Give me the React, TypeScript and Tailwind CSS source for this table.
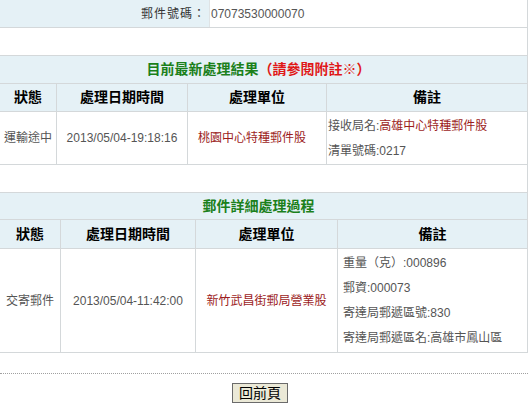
import React from 'react';

const font = { fontFamily: '"Liberation Sans", "Noto Sans CJK TC", sans-serif' };

const HeaderRow: React.FC<{ widths: string[]; h: string }> = ({ widths, h }) => {
    const labels = ['狀態', '處理日期時間', '處理單位', '備註'];
    return (
        <div className={`flex ${h} bg-[#e5f1f6] border-b border-[#d4d8da]`}>
            {labels.map((l, i) => (
                <div
                    key={l}
                    className={`${widths[i]} flex items-center justify-center text-[14px] font-bold text-black ${i > 0 ? 'border-l border-[#d4d8da]' : ''}`}
                >
                    {l}
                </div>
            ))}
        </div>
    );
};

const TitleRow: React.FC<{ h: string; children: React.ReactNode }> = ({ h, children }) => (
    <div className={`${h} bg-[#e5f1f6] border-b border-[#d4d8da] flex items-center justify-center pr-[10px] text-[14px] font-bold`}>
        {children}
    </div>
);

const Remarks: React.FC<{ lines: React.ReactNode[] }> = ({ lines }) => (
    <div className="flex flex-col">
        {lines.map((l, i) => (
            <div key={i} className="h-[25px] flex items-center">{l}</div>
        ))}
    </div>
);

const DataRow: React.FC<{ widths: string[]; h: string; status: string; time: string; unit: string; unitPad: string; remarks: React.ReactNode[]; remarkPad: string }> = ({ widths, h, status, time, unit, unitPad, remarks, remarkPad }) => (
    <div className={`flex ${h} border-b border-[#d4d8da] text-[12px] text-[#555]`}>
        <div className={`${widths[0]} flex items-center justify-center`}>{status}</div>
        <div className={`${widths[1]} flex items-center justify-center border-l border-[#d4d8da]`}>{time}</div>
        <div className={`${widths[2]} flex items-center justify-center border-l border-[#d4d8da] ${unitPad} text-[#9c1c1c]`}>{unit}</div>
        <div className={`${widths[3]} flex items-center border-l border-[#d4d8da] ${remarkPad}`}>
            <Remarks lines={remarks} />
        </div>
    </div>
);

export default function App() {
    const w1 = ['w-[56px]', 'w-[131px]', 'w-[139px]', 'flex-1'];
    const w2 = ['w-[60px]', 'w-[135px]', 'w-[142px]', 'flex-1'];

    return (
        <div className="w-[529px] h-[409px] bg-white" style={font}>
            <div className="w-[528px] border-r border-[#d4d8da]">
                <div className="flex h-[28px] border-b border-[#d4d8da] text-[12px]">
                    <div className="w-[209px] bg-[#e5f1f6] flex items-center justify-end pr-[3px] text-[#333] tracking-[1px]">郵件號碼：</div>
                    <div className="flex-1 border-l border-[#dfe3e5] flex items-center pl-[1px] text-[#555]">07073530000070</div>
                </div>
                <div className="h-[28px] border-b border-[#d4d8da]" />
                <TitleRow h="h-[28px]">
                    <span className="text-[#1b801b]">目前最新處理結果</span>
                    <span className="text-[#e01818]">（請參閱附註※）</span>
                </TitleRow>
                <HeaderRow widths={w1} h="h-[28px]" />
                <DataRow
                    widths={w1}
                    h="h-[53px]"
                    status="運輸途中"
                    time="2013/05/04-19:18:16"
                    unit="桃園中心特種郵件股"
                    unitPad="pr-[10px]"
                    remarkPad="pl-[1px]"
                    remarks={[
                        <span>接收局名:<span className="text-[#9c1c1c]">高雄中心特種郵件股</span></span>,
                        <span>清單號碼:0217</span>,
                    ]}
                />
                <div className="h-[28px] border-b border-[#d4d8da]" />
                <TitleRow h="h-[27px]">
                    <span className="text-[#1b801b]">郵件詳細處理過程</span>
                </TitleRow>
                <HeaderRow widths={w2} h="h-[29px]" />
                <DataRow
                    widths={w2}
                    h="h-[104px]"
                    status="交寄郵件"
                    time="2013/05/04-11:42:00"
                    unit="新竹武昌街郵局營業股"
                    unitPad="pr-0"
                    remarkPad="pl-[5px]"
                    remarks={[
                        <span>重量（克）:000896</span>,
                        <span>郵資:000073</span>,
                        <span>寄達局郵遞區號:830</span>,
                        <span>寄達局郵遞區名:高雄市鳳山區</span>,
                    ]}
                />
            </div>
            <div className="mt-[20px] w-[528px] border-t border-dotted border-[#a0a0a0]" />
            <div className="mt-[9px] pl-[232px]">
                <button className="w-[56px] h-[20px] bg-[#ebe9d7] border border-[#6b6b6b] text-[14px] text-black flex items-center justify-center leading-none">
                    回前頁
                </button>
            </div>
        </div>
    );
}
